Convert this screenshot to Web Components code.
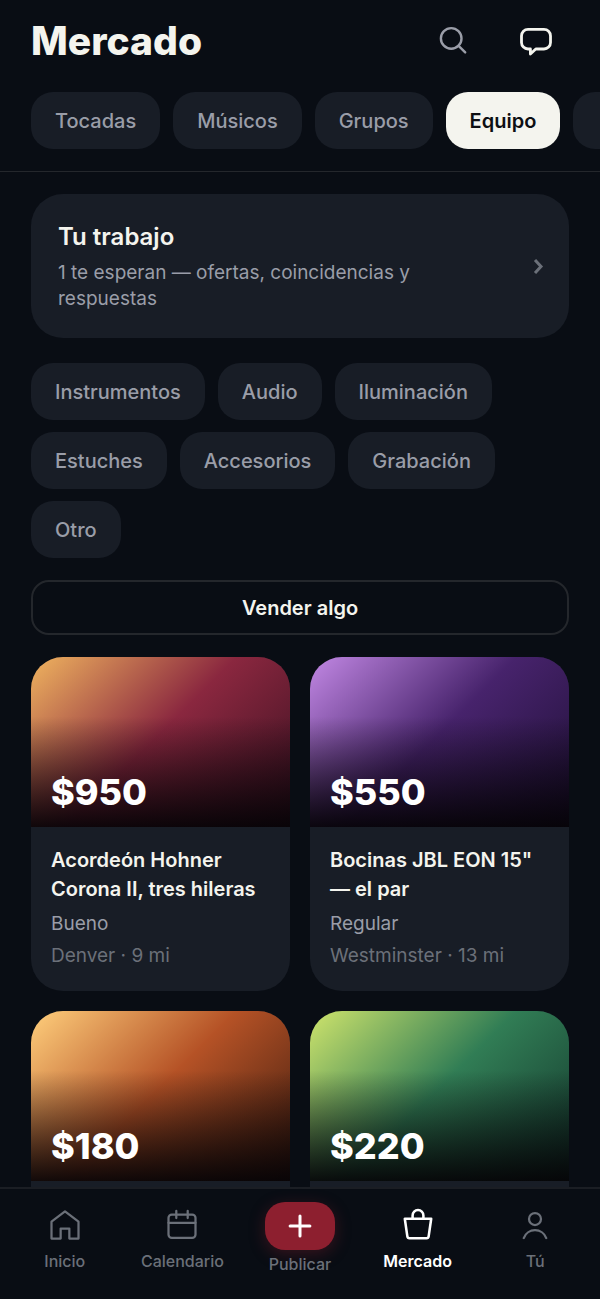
<!DOCTYPE html>
<html lang="es">
<head>
<meta charset="utf-8">
<meta name="viewport" content="width=device-width, initial-scale=1">
<title>Mercado</title>
<style>
  :root {
    --bg: #090d14;
    --panel: #181d26;
    --line: #24272c;
    --ink: #f4f4ee;
    --soft: #9a9da8;
    --dim: #6b7079;
    --accent: #8d1f2f;
  }
  html, body { height: 100%; }
  body {
    margin: 0;
    background: var(--bg);
    color: var(--ink);
    font-family: Inter, "Open Sans", sans-serif;
    font-size: 20px;
  }
</style>
</head>
<body>

<market-app>
  <app-header slot="header" heading="Mercado">
    <chip-button>Tocadas</chip-button>
    <chip-button>Músicos</chip-button>
    <chip-button>Grupos</chip-button>
    <chip-button active>Equipo</chip-button>
    <chip-button label="Más"></chip-button>
  </app-header>

  <work-card>
    <span slot="title">Tu trabajo</span>
    1 te esperan — ofertas, coincidencias y respuestas
  </work-card>

  <chip-list>
    <chip-button>Instrumentos</chip-button>
    <chip-button>Audio</chip-button>
    <chip-button>Iluminación</chip-button>
    <chip-button>Estuches</chip-button>
    <chip-button>Accesorios</chip-button>
    <chip-button>Grabación</chip-button>
    <chip-button>Otro</chip-button>
  </chip-list>

  <sell-button>Vender algo</sell-button>

  <listing-grid>
    <listing-card tone="wine" price="$950" condition="Bueno" place="Denver · 9 mi">Acordeón Hohner Corona II, tres hileras</listing-card>
    <listing-card tone="violet" price="$550" condition="Regular" place="Westminster · 13 mi">Bocinas JBL EON 15" — el par</listing-card>
    <listing-card tone="amber" price="$180"></listing-card>
    <listing-card tone="green" price="$220"></listing-card>
  </listing-grid>

  <tab-bar slot="nav">
    <tab-item icon="home">Inicio</tab-item>
    <tab-item icon="calendar">Calendario</tab-item>
    <tab-item icon="plus" primary>Publicar</tab-item>
    <tab-item icon="bag" active>Mercado</tab-item>
    <tab-item icon="user">Tú</tab-item>
  </tab-bar>
</market-app>

<script>
// icon shapes, drawn with the current colour
const icons = {
  home: '<path d="M3 21V9.8l9-6.9 9 6.9V21h-6.1v-6.6H9.1V21z"/>',
  calendar: '<rect x="3" y="5" width="18" height="15.6" rx="2.2"/><path d="M3 10.5h18M8.2 2.6v4.8M15.8 2.6v4.8"/>',
  plus: '<path d="M12 5.4v13.2M5.4 12h13.2"/>',
  bag: '<path d="M3.2 7.8h17.6l-1.7 11.8a1.4 1.4 0 0 1-1.4 1.2H6.3a1.4 1.4 0 0 1-1.4-1.2z"/><path d="M8.4 7.8V5.6a3.6 3.6 0 0 1 7.2 0v2.2"/>',
  user: '<circle cx="12" cy="8" r="4"/><path d="M4.5 20.7a8 8 0 0 1 15 0"/>'
};

// small helper: attach an open shadow root and fill it from a template
function render(el, html) {
  const template = document.createElement("template");
  template.innerHTML = html;
  el.attachShadow({ mode: "open" });
  el.shadowRoot.appendChild(template.content.cloneNode(true));
}

class MarketApp extends HTMLElement {
  constructor() {
    super();
    render(this, `
      <style>
        :host { display: flex; flex-direction: column; height: 100vh; overflow: hidden; }
        main {
          flex: 1;
          min-height: 0;
          overflow: hidden auto;
          scrollbar-width: none;
          display: flex;
          flex-direction: column;
          gap: 22px;
          padding: 22px 31px;
        }
      </style>
      <slot name="header"></slot>
      <main><slot></slot></main>
      <slot name="nav"></slot>
    `);
  }
}

class AppHeader extends HTMLElement {
  constructor() {
    super();
    render(this, `
      <style>
        :host { display: block; flex: none; border-bottom: 1px solid var(--line); }
        .top { display: flex; align-items: center; gap: 17px; padding: 8px 31px 0; }
        h1 { flex: 1; margin: 0; font-size: 39px; line-height: 48px; font-weight: 800; }
        button {
          display: grid;
          place-items: center;
          width: 66px;
          height: 66px;
          padding: 0;
          border: 0;
          background: none;
          color: var(--soft);
        }
        button.on { color: var(--ink); }
        svg { width: 36px; height: 36px; fill: none; stroke: currentColor; stroke-linecap: round; stroke-linejoin: round; }
        nav { display: flex; gap: 13px; padding: 18px 0 22px 31px; overflow: hidden; }
      </style>
      <header>
        <div class="top">
          <h1></h1>
          <button type="button" aria-label="Buscar">
            <svg viewBox="0 0 36 36" stroke-width="2.4"><circle cx="16.2" cy="15.4" r="10.3"/><path d="M23.6 22.8l6.6 6.6"/></svg>
          </button>
          <button type="button" class="on" aria-label="Mensajes">
            <svg viewBox="0 0 36 36" stroke-width="2.8"><path d="M10 6.4h16a6.5 6.5 0 0 1 6.5 6.5v6.6a6.5 6.5 0 0 1-6.5 6.500h-8.200L12.400 31v-5H10a6.500 6.500 0 0 1-6.500-6.500v-6.600A6.500 6.500 0 0 1 10 6.400z"/></svg>
          </button>
        </div>
        <nav><slot></slot></nav>
      </header>
    `);
    this.shadowRoot.querySelector("h1").innerText = this.getAttribute("heading");
  }
}

class ChipButton extends HTMLElement {
  constructor() {
    super();
    render(this, `
      <style>
        :host { display: block; flex: none; }
        button {
          display: block;
          height: 57px;
          min-width: 57px;
          padding: 0 24px;
          border: 0;
          border-radius: 22px;
          background: var(--panel);
          color: var(--soft);
          font: 500 20px/28px Inter, sans-serif;
          white-space: nowrap;
        }
        :host([active]) button { background: var(--ink); color: #0d0f13; font-weight: 600; }
      </style>
      <button type="button"><slot></slot></button>
    `);
    if (this.hasAttribute("label")) {
      this.shadowRoot.querySelector("button").setAttribute("aria-label", this.getAttribute("label"));
    }
  }
}

class ChipList extends HTMLElement {
  constructor() {
    super();
    render(this, `
      <style>
        :host { display: flex; flex-wrap: wrap; gap: 12px 13px; padding-top: 3px; }
      </style>
      <slot></slot>
    `);
  }
}

class WorkCard extends HTMLElement {
  constructor() {
    super();
    render(this, `
      <style>
        :host { display: block; }
        a {
          display: flex;
          align-items: center;
          gap: 20px;
          padding: 26px 24px 26px 27px;
          border-radius: 32px;
          background: var(--panel);
          color: inherit;
          text-decoration: none;
        }
        .text { flex: 1; }
        h2 { margin: 0 0 6px; font-size: 24px; line-height: 34px; font-weight: 600; }
        p { margin: 0; font-size: 19px; line-height: 26px; color: var(--soft); }
        svg { flex: none; width: 14px; height: 18px; fill: none; stroke: var(--dim); stroke-width: 3; }
      </style>
      <a href="#trabajo">
        <div class="text">
          <h2><slot name="title"></slot></h2>
          <p><slot></slot></p>
        </div>
        <svg viewBox="0 0 14 18"><path d="M4 3l6 6.500L4 16"/></svg>
      </a>
    `);
  }
}

class SellButton extends HTMLElement {
  constructor() {
    super();
    render(this, `
      <style>
        :host { display: block; }
        button {
          display: block;
          width: 100%;
          height: 55px;
          border: 2px solid var(--line);
          border-radius: 18px;
          background: none;
          color: var(--ink);
          font: 600 20px/28px Inter, sans-serif;
        }
      </style>
      <button type="button"><slot></slot></button>
    `);
  }
}

class ListingGrid extends HTMLElement {
  constructor() {
    super();
    render(this, `
      <style>
        :host { display: grid; grid-template-columns: 1fr 1fr; gap: 20px; }
      </style>
      <slot></slot>
    `);
  }
}

class ListingCard extends HTMLElement {
  constructor() {
    super();
    render(this, `
      <style>
        :host {
          display: block;
          border-radius: 32px;
          overflow: hidden;
          background: var(--panel);
        }
        :host([tone="wine"]) { --a: #f0b45f; --b: #8a273f; --c: #381020; }
        :host([tone="violet"]) { --a: #c288e4; --b: #47236c; --c: #1e0f35; }
        :host([tone="amber"]) { --a: #ffcf7c; --b: #b55226; --c: #3c1a0e; }
        :host([tone="green"]) { --a: #cfe46c; --b: #317d55; --c: #12342b; }
        .cover {
          display: flex;
          align-items: flex-end;
          height: 170px;
          box-sizing: border-box;
          padding: 12px 20px;
          background:
            linear-gradient(180deg, transparent 35%, rgba(5, 3, 6, 0.93) 100%),
            linear-gradient(135deg, var(--a), var(--b) 48%, var(--c));
        }
        strong { font-size: 36px; line-height: 46px; font-weight: 800; color: #fff; }
        .body { padding: 19px 20px 21px; }
        h3 { margin: 0 0 6px; font-size: 20px; line-height: 29px; font-weight: 600; }
        p { margin: 0 0 4px; font-size: 19px; line-height: 28px; color: var(--soft); }
        p.place { margin: 0; color: var(--dim); }
      </style>
      <article>
        <div class="cover"><strong></strong></div>
        <div class="body">
          <h3><slot></slot></h3>
          <p class="condition"></p>
          <p class="place"></p>
        </div>
      </article>
    `);
    this.shadowRoot.querySelector("strong").innerText = this.getAttribute("price");
    this.shadowRoot.querySelector(".condition").innerText = this.getAttribute("condition") || "";
    this.shadowRoot.querySelector(".place").innerText = this.getAttribute("place") || "";
  }
}

class TabBar extends HTMLElement {
  constructor() {
    super();
    render(this, `
      <style>
        :host { display: block; flex: none; border-top: 2px solid #1b1e24; background: var(--bg); }
        nav { display: flex; height: 110px; box-sizing: border-box; padding: 0 6px; }
      </style>
      <nav><slot></slot></nav>
    `);
  }
}

class TabItem extends HTMLElement {
  constructor() {
    super();
    render(this, `
      <style>
        :host { display: block; flex: 1 1 0; color: var(--dim); }
        :host([active]) { color: #fff; }
        a {
          display: flex;
          flex-direction: column;
          align-items: center;
          gap: 7px;
          padding-top: 18px;
          color: inherit;
          text-decoration: none;
          font-size: 16px;
          line-height: 22px;
          font-weight: 500;
        }
        .icon { display: grid; place-items: center; }
        svg { width: 36px; height: 36px; fill: none; stroke: currentColor; stroke-width: 1.5; stroke-linecap: round; stroke-linejoin: round; }
        :host([active]) a { font-weight: 600; }
        :host([active]) svg { stroke-width: 1.7; }
        :host([primary]) a { gap: 3px; padding-top: 13px; }
        :host([primary]) .icon {
          width: 70px;
          height: 48px;
          border-radius: 20px;
          background: var(--accent);
          color: #fff;
          box-shadow: 0 4px 16px rgba(141, 31, 47, 0.35);
        }
        :host([primary]) svg { stroke-width: 2; }
      </style>
      <a>
        <span class="icon"><svg viewBox="0 0 24 24">${icons[this.getAttribute("icon")]}</svg></span>
        <span><slot></slot></span>
      </a>
    `);
    this.shadowRoot.querySelector("a").href = "#" + this.getAttribute("icon");
    if (this.hasAttribute("active")) {
      this.shadowRoot.querySelector("a").setAttribute("aria-current", "page");
    }
  }
}

customElements.define("market-app", MarketApp);
customElements.define("app-header", AppHeader);
customElements.define("chip-button", ChipButton);
customElements.define("chip-list", ChipList);
customElements.define("work-card", WorkCard);
customElements.define("sell-button", SellButton);
customElements.define("listing-grid", ListingGrid);
customElements.define("listing-card", ListingCard);
customElements.define("tab-bar", TabBar);
customElements.define("tab-item", TabItem);
</script>
</body>
</html>
